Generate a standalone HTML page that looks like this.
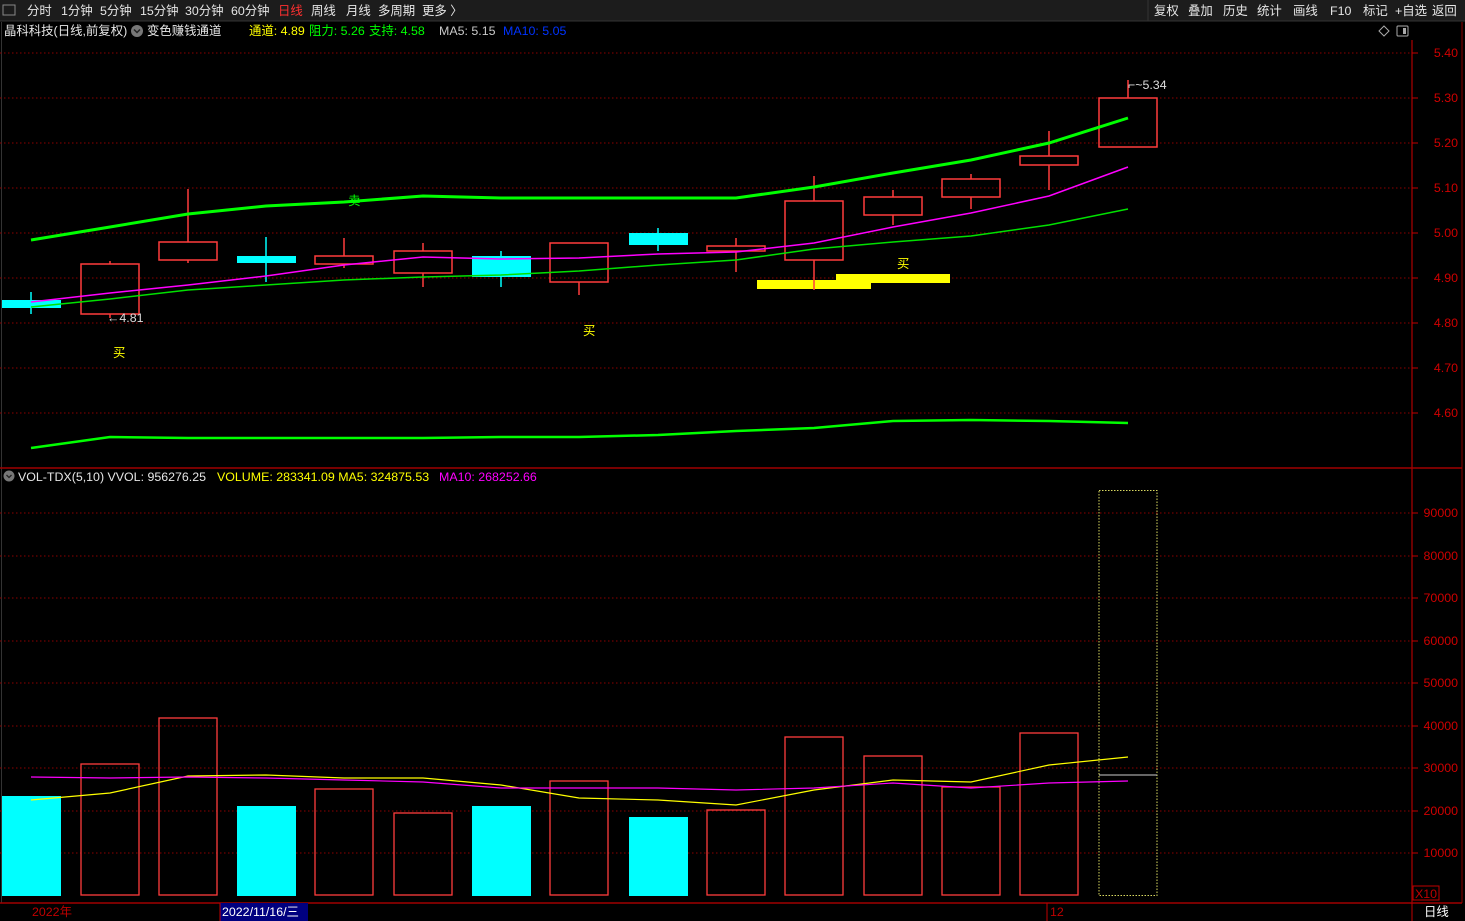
<!DOCTYPE html>
<html><head><meta charset="utf-8"><style>
html,body{margin:0;padding:0;background:#000;width:1465px;height:921px;overflow:hidden}
svg{display:block}
text{font-family:"Liberation Sans","Noto Sans CJK SC",sans-serif;font-size:12.4px}
</style></head><body>
<svg width="1465" height="921" viewBox="0 0 1465 921" xmlns="http://www.w3.org/2000/svg">
<rect width="1465" height="921" fill="#000"/>
<rect x="0" y="0" width="1465" height="21" fill="#1c1c1c"/>
<line x1="0" y1="21" x2="1465" y2="21" stroke="#333"/>
<rect x="3" y="5" width="12" height="10" fill="none" stroke="#888"/>
<g fill="#e6e6e6">
<text x="27" y="15">分时</text><text x="61" y="15">1分钟</text><text x="100" y="15">5分钟</text>
<text x="140" y="15">15分钟</text><text x="185" y="15">30分钟</text><text x="231" y="15">60分钟</text>
<text x="278" y="15" fill="#ff3030">日线</text><text x="311" y="15">周线</text><text x="346" y="15">月线</text>
<text x="378" y="15">多周期</text><text x="422" y="15">更多 〉</text>
</g>
<g fill="#e6e6e6">
<line x1="1148" y1="0" x2="1148" y2="21" stroke="#333"/>
<text x="1154" y="15">复权</text><text x="1188" y="15">叠加</text><text x="1223" y="15">历史</text>
<text x="1257" y="15">统计</text><text x="1293" y="15">画线</text><text x="1330" y="15">F10</text>
<text x="1363" y="15">标记</text><text x="1395" y="15">+自选</text><text x="1432" y="15">返回</text>
</g>
<text x="4" y="35" fill="#e6e6e6">晶科科技(日线,前复权)</text>
<circle cx="137" cy="31" r="6" fill="#777"/><path d="M134 29.5l3 3 3-3" stroke="#222" stroke-width="1.5" fill="none"/>
<text x="147" y="35" fill="#e6e6e6">变色赚钱通道</text>
<text x="249" y="35" fill="#ffff00">通道: 4.89</text>
<text x="309" y="35" fill="#00ff00">阻力: 5.26</text>
<text x="369" y="35" fill="#00ff00">支持: 4.58</text>
<text x="439" y="35" fill="#c8c8c8">MA5: 5.15</text>
<text x="503" y="35" fill="#0033ff">MA10: 5.05</text>
<path d="M1384 26l5 5-5 5-5-5z" fill="none" stroke="#aaa"/>
<rect x="1397" y="26" width="11" height="10" rx="1" fill="none" stroke="#aaa"/><rect x="1403" y="28" width="3" height="6" fill="#aaa"/>
<line x1="1.5" y1="22" x2="1.5" y2="903" stroke="#333"/>
<line x1="1412" y1="40" x2="1412" y2="903" stroke="#8b0000" stroke-width="1.5"/>
<line x1="1462" y1="22" x2="1462" y2="903" stroke="#8b0000"/>
<line x1="0" y1="468" x2="1462" y2="468" stroke="#a00000" stroke-width="1.5"/>
<line x1="0" y1="903" x2="1462" y2="903" stroke="#a00000" stroke-width="1.5"/>
<g stroke="#8b0000" stroke-dasharray="1.5 2.5">
<line x1="0" y1="53" x2="1410" y2="53"/><line x1="0" y1="98" x2="1410" y2="98"/><line x1="0" y1="143" x2="1410" y2="143"/>
<line x1="0" y1="188" x2="1410" y2="188"/><line x1="0" y1="233" x2="1410" y2="233"/><line x1="0" y1="278" x2="1410" y2="278"/>
<line x1="0" y1="323" x2="1410" y2="323"/><line x1="0" y1="368" x2="1410" y2="368"/><line x1="0" y1="413" x2="1410" y2="413"/>
</g>
<g fill="#d00000" text-anchor="end" font-size="12.4">
<text x="1458" y="57">5.40</text><text x="1458" y="102">5.30</text><text x="1458" y="147">5.20</text>
<text x="1458" y="192">5.10</text><text x="1458" y="237">5.00</text><text x="1458" y="282">4.90</text>
<text x="1458" y="327">4.80</text><text x="1458" y="372">4.70</text><text x="1458" y="417">4.60</text>
</g>
<g stroke="#c00000"><line x1="1412" y1="53" x2="1418" y2="53"/><line x1="1412" y1="98" x2="1418" y2="98"/><line x1="1412" y1="143" x2="1418" y2="143"/><line x1="1412" y1="188" x2="1418" y2="188"/><line x1="1412" y1="233" x2="1418" y2="233"/><line x1="1412" y1="278" x2="1418" y2="278"/><line x1="1412" y1="323" x2="1418" y2="323"/><line x1="1412" y1="368" x2="1418" y2="368"/><line x1="1412" y1="413" x2="1418" y2="413"/></g>
<rect x="757" y="280" width="114" height="9" fill="#ffff00"/>
<rect x="836" y="274" width="114" height="9" fill="#ffff00"/>
<!-- candles (hollow) -->
<g stroke="#ff3c3c" stroke-width="1.5" fill="none">
<line x1="110" y1="261" x2="110" y2="264"/><line x1="110" y1="314" x2="110" y2="318"/><rect x="81" y="264" width="58" height="50"/>
<line x1="188" y1="189" x2="188" y2="242"/><line x1="188" y1="260" x2="188" y2="263"/><rect x="159" y="242" width="58" height="18"/>
<line x1="344" y1="238" x2="344" y2="256"/><line x1="344" y1="264" x2="344" y2="268"/><rect x="315" y="256" width="58" height="8"/>
<line x1="423" y1="243" x2="423" y2="251"/><line x1="423" y1="273" x2="423" y2="287"/><rect x="394" y="251" width="58" height="22"/>
<line x1="579" y1="282" x2="579" y2="295"/><rect x="550" y="243" width="58" height="39"/>
<line x1="736" y1="238" x2="736" y2="246"/><line x1="736" y1="251" x2="736" y2="272"/><rect x="707" y="246" width="58" height="5"/>
<line x1="814" y1="176" x2="814" y2="201"/><line x1="814" y1="260" x2="814" y2="290"/><rect x="785" y="201" width="58" height="59"/>
<line x1="893" y1="190" x2="893" y2="197"/><line x1="893" y1="215" x2="893" y2="225"/><rect x="864" y="197" width="58" height="18"/>
<line x1="971" y1="174" x2="971" y2="179"/><line x1="971" y1="197" x2="971" y2="209"/><rect x="942" y="179" width="58" height="18"/>
<line x1="1049" y1="131" x2="1049" y2="156"/><line x1="1049" y1="165" x2="1049" y2="190"/><rect x="1020" y="156" width="58" height="9"/>
<line x1="1128" y1="80" x2="1128" y2="98"/><rect x="1099" y="98" width="58" height="49"/>
</g>
<g stroke="#00ffff" stroke-width="1.5">
<line x1="31" y1="292" x2="31" y2="314"/><line x1="266" y1="237" x2="266" y2="282"/><line x1="501" y1="251" x2="501" y2="287"/><line x1="658" y1="228" x2="658" y2="251"/>
</g>
<g fill="#00ffff">
<rect x="2" y="300" width="59" height="8"/><rect x="237" y="256" width="59" height="7"/><rect x="472" y="256" width="59" height="21"/><rect x="629" y="233" width="59" height="12"/>
</g>
<polyline fill="none" stroke="#00ff00" stroke-width="3" points="31,240 110,227 188,214 266,206 344,202 423,196 501,198 579,198 658,198 736,198 814,187 893,173 971,160 1049,143 1128,118"/>
<polyline fill="none" stroke="#00ff00" stroke-width="2.5" points="31,448 110,437 188,438 266,438 344,438 423,438 501,437 579,437 658,435 736,431 814,428 893,421 971,420 1049,421 1128,423"/>
<polyline fill="none" stroke="#ff00ff" stroke-width="1.5" points="31,302 110,293 188,285 266,276 344,265 423,257 501,259 579,258 658,254 736,252 814,243 893,227 971,213 1049,196 1128,167"/>
<polyline fill="none" stroke="#00e000" stroke-width="1.5" points="31,307 110,299 188,290 266,285 344,280 423,277 501,275 579,271 658,265 736,260 814,249 893,242 971,236 1049,225 1128,209"/>
<text x="107" y="322" fill="#ddd" font-size="11.5">←4.81</text>
<text x="1128" y="89" fill="#ddd" font-size="11.5">⌐~5.34</text>
<g fill="#ffff00" font-size="12"><text x="113" y="357">买</text><text x="583" y="335">买</text><text x="897" y="268">买</text></g>
<text x="348" y="205" fill="#00ff00" font-size="11">卖</text>
<circle cx="9" cy="476" r="5.5" fill="#777"/><path d="M6.5 475l2.5 2.5 2.5-2.5" stroke="#222" stroke-width="1.3" fill="none"/>
<text x="18" y="481" fill="#e6e6e6">VOL-TDX(5,10) VVOL: 956276.25</text>
<text x="217" y="481" fill="#ffff00">VOLUME: 283341.09 MA5: 324875.53</text>
<text x="439" y="481" fill="#ff00ff">MA10: 268252.66</text>
<g stroke="#8b0000" stroke-dasharray="1.5 2.5">
<line x1="0" y1="513" x2="1410" y2="513"/><line x1="0" y1="556" x2="1410" y2="556"/><line x1="0" y1="598" x2="1410" y2="598"/>
<line x1="0" y1="641" x2="1410" y2="641"/><line x1="0" y1="683" x2="1410" y2="683"/><line x1="0" y1="726" x2="1410" y2="726"/>
<line x1="0" y1="768" x2="1410" y2="768"/><line x1="0" y1="811" x2="1410" y2="811"/><line x1="0" y1="853" x2="1410" y2="853"/>
</g>
<g fill="#d00000" text-anchor="end">
<text x="1458" y="517">90000</text><text x="1458" y="560">80000</text><text x="1458" y="602">70000</text><text x="1458" y="645">60000</text><text x="1458" y="687">50000</text><text x="1458" y="730">40000</text><text x="1458" y="772">30000</text><text x="1458" y="815">20000</text><text x="1458" y="857">10000</text>
</g>
<g stroke="#c00000"><line x1="1412" y1="513" x2="1418" y2="513"/><line x1="1412" y1="556" x2="1418" y2="556"/><line x1="1412" y1="598" x2="1418" y2="598"/><line x1="1412" y1="641" x2="1418" y2="641"/><line x1="1412" y1="683" x2="1418" y2="683"/><line x1="1412" y1="726" x2="1418" y2="726"/><line x1="1412" y1="768" x2="1418" y2="768"/><line x1="1412" y1="811" x2="1418" y2="811"/><line x1="1412" y1="853" x2="1418" y2="853"/></g>
<rect x="1413" y="886" width="26" height="14" fill="none" stroke="#c00000"/><text x="1415" y="898" fill="#c00000" font-size="11">X10</text>
<g fill="#00ffff">
<rect x="2" y="796" width="59" height="100"/><rect x="237" y="806" width="59" height="90"/><rect x="472" y="806" width="59" height="90"/><rect x="629" y="817" width="59" height="79"/>
</g>
<g stroke="#ff3c3c" stroke-width="1.3" fill="none">
<rect x="81" y="764" width="58" height="131"/><rect x="159" y="718" width="58" height="177"/><rect x="315" y="789" width="58" height="106"/>
<rect x="394" y="813" width="58" height="82"/><rect x="550" y="781" width="58" height="114"/><rect x="707" y="810" width="58" height="85"/>
<rect x="785" y="737" width="58" height="158"/><rect x="864" y="756" width="58" height="139"/><rect x="942" y="787" width="58" height="108"/><rect x="1020" y="733" width="58" height="162"/>
</g>
<rect x="1099" y="490.5" width="58" height="405" fill="none" stroke="#d8d860" stroke-dasharray="1.5 1.5"/>
<line x1="1099" y1="775" x2="1157" y2="775" stroke="#ccc"/>
<polyline fill="none" stroke="#ffff00" stroke-width="1.2" points="31,800 110,793 188,776 266,775 344,778 423,778 501,785 579,798 658,800 736,805 814,790 893,780 971,782 1049,765 1128,757"/>
<polyline fill="none" stroke="#ff00ff" stroke-width="1.2" points="31,777 110,778 188,777 266,778 344,780 423,782 501,788 579,788 658,788 736,790 814,788 893,783 971,788 1049,783 1128,781"/>
<text x="32" y="916" fill="#c00000">2022年</text>
<rect x="220" y="903" width="88" height="18" fill="#000080"/>
<line x1="220" y1="903" x2="220" y2="921" stroke="#c00000"/>
<text x="222" y="916" fill="#fff">2022/11/16/三</text>
<line x1="1047" y1="903" x2="1047" y2="921" stroke="#c00000"/>
<text x="1050" y="916" fill="#c00000">12</text>
<line x1="1412" y1="903" x2="1412" y2="921" stroke="#c00000"/>
<text x="1424" y="916" fill="#fff">日线</text>
</svg>
</body></html>
